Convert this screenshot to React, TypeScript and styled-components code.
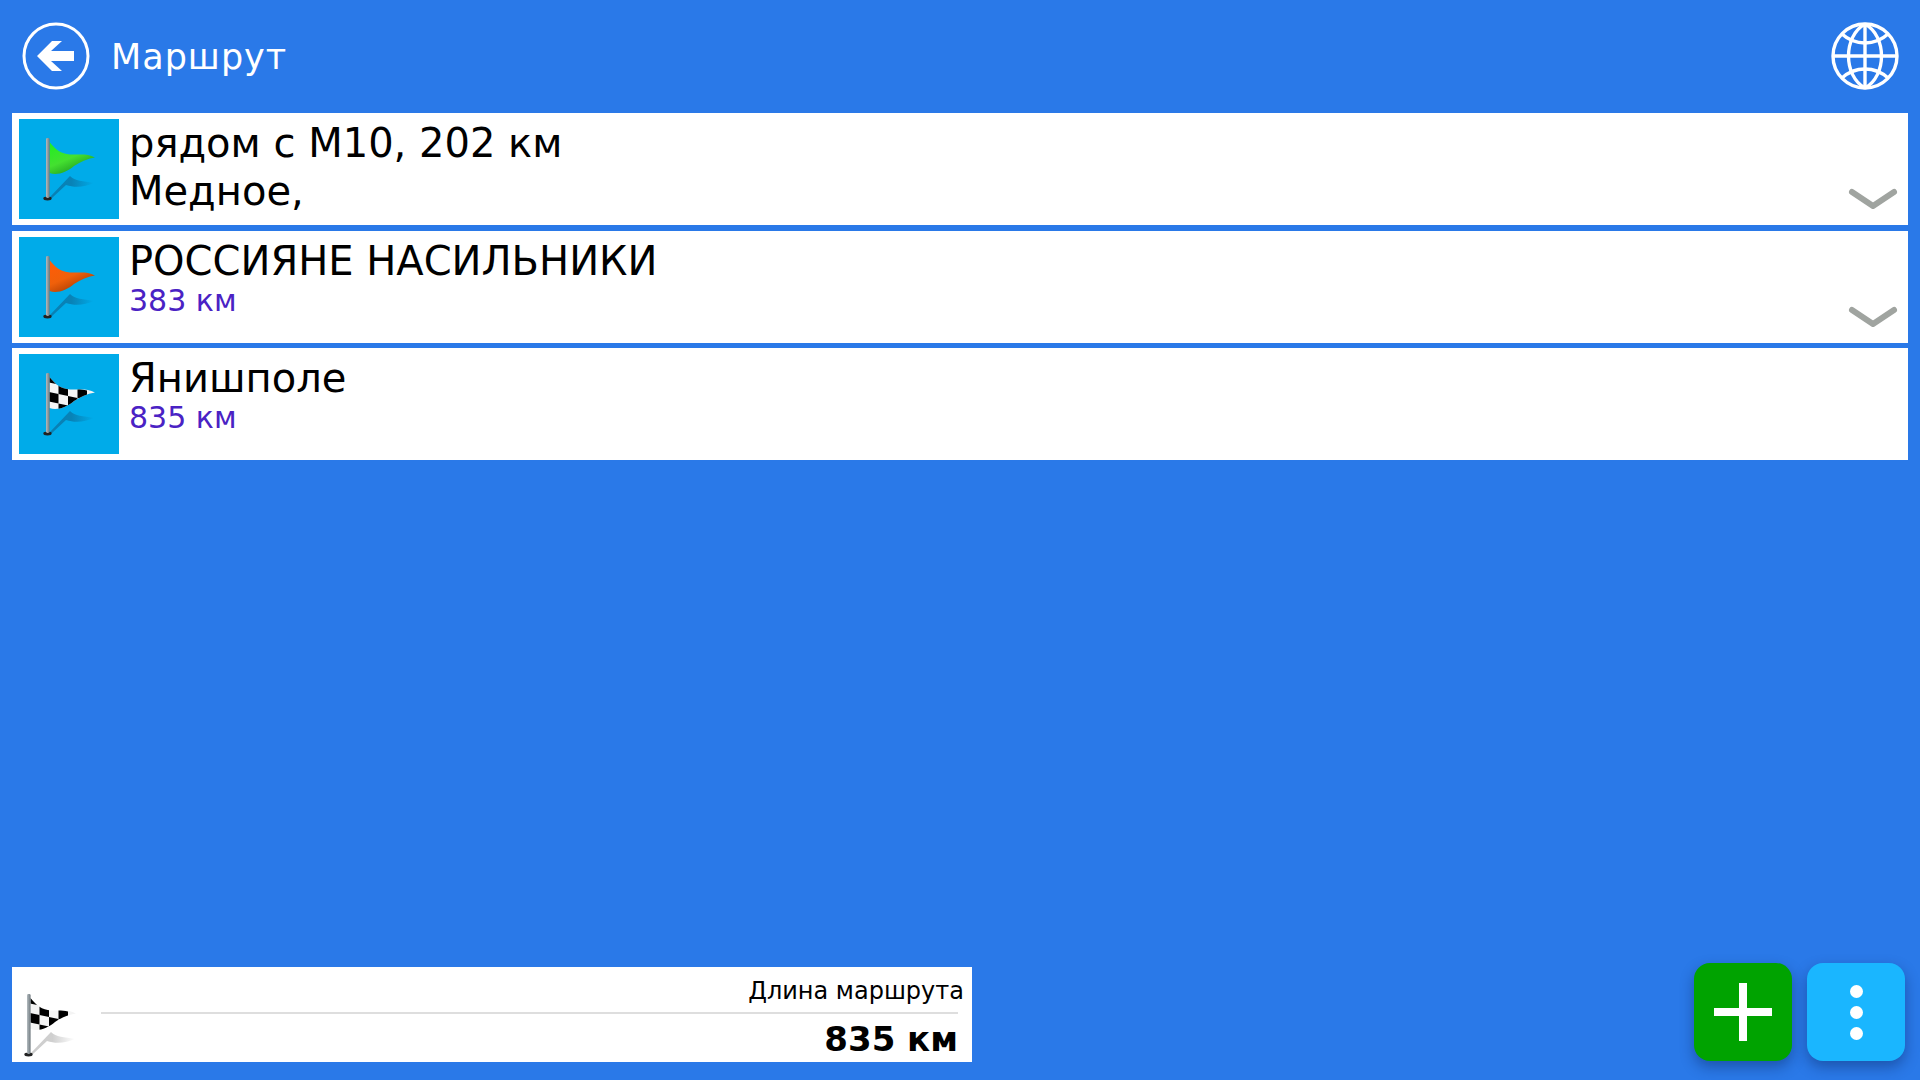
import React from 'react';
import styled, { createGlobalStyle } from 'styled-components';

type FlagKind = 'green' | 'orange' | 'checker';

interface Waypoint {
    id: number;
    flag: FlagKind;
    title: string;
    place?: string;
    distance?: string;
    expandable?: boolean;
}

const waypoints: Waypoint[] = [
    { id: 1, flag: 'green', title: 'рядом с М10, 202 км', place: 'Медное,', expandable: true },
    { id: 2, flag: 'orange', title: 'РОССИЯНЕ НАСИЛЬНИКИ', distance: '383 км', expandable: true },
    { id: 3, flag: 'checker', title: 'Янишполе', distance: '835 км' },
];

const GlobalStyle = createGlobalStyle`
    html, body {
        margin: 0;
        padding: 0;
        background: #2a79e8;
    }
    * {
        box-sizing: border-box;
    }
`;

const Page = styled.div`
    width: 1920px;
    height: 1080px;
    display: flex;
    flex-direction: column;
    overflow: hidden;
    background: #2a79e8;
    font-family: 'DejaVu Sans', sans-serif;
`;

const Header = styled.header`
    height: 113px;
    flex: none;
    display: flex;
    align-items: center;
    padding: 0 21px 2px 22px;
    color: #fff;
`;

const HeaderTitle = styled.h1`
    flex: 1;
    margin: 2px 0 0 21px;
    font-size: 35px;
    font-weight: 400;
    letter-spacing: 1px;
`;

const List = styled.main`
    flex: 1;
    display: flex;
    flex-direction: column;
    gap: 5.5px;
    padding: 0 12px;
`;

const Row = styled.article`
    position: relative;
    height: 112px;
    display: flex;
    padding: 6px 6px 6px 7px;
    background: #fff;
`;

const Tile = styled.div`
    width: 100px;
    height: 100px;
    flex: none;
    background: #00abe9;
`;

const RowText = styled.div`
    margin-left: 10px;
    display: flex;
    flex-direction: column;
`;

const RowTitle = styled.div`
    font-size: 40px;
    line-height: 48px;
    color: #000;
`;

const RowDistance = styled.div`
    font-size: 30px;
    line-height: 36px;
    margin-top: -2px;
    color: #4a22c4;
`;

const Chevron = styled.svg`
    position: absolute;
    right: 10px;
    bottom: 13px;
`;

const Footer = styled.footer`
    flex: none;
    height: 117px;
    display: flex;
    align-items: flex-start;
    justify-content: space-between;
    padding: 0 15px 0 12px;
`;

const Summary = styled.section`
    width: 960px;
    height: 95px;
    margin-top: 4px;
    display: flex;
    background: #fff;
`;

const SummaryFlag = styled.div`
    flex: none;
    width: 101px;
    margin-left: -12px;
    padding-top: 8px;
`;

const SummaryBody = styled.div`
    flex: 1;
    margin-right: 14px;
    display: flex;
    flex-direction: column;
`;

const SummaryLabel = styled.div`
    margin-right: -6px;
    height: 45px;
    padding-top: 10px;
    font-size: 24px;
    line-height: 28px;
    text-align: right;
    color: #000;
`;

const SummaryRule = styled.div`
    height: 2px;
    background: #dedede;
`;

const SummaryValue = styled.div`
    margin-top: 5px;
    font-size: 34px;
    line-height: 40px;
    font-weight: 700;
    text-align: right;
    color: #000;
`;

const Actions = styled.div`
    display: flex;
    gap: 15px;
`;

const ActionButton = styled.button<{ $color: string }>`
    width: 98px;
    height: 98px;
    padding: 0;
    border: 0;
    border-radius: 16px;
    display: flex;
    flex-direction: column;
    align-items: center;
    justify-content: center;
    gap: 8px;
    background: ${({ $color }) => $color};
    box-shadow: 0 6px 14px rgba(10, 40, 100, 0.45);
`;

const PlusIcon = styled.svg`
    display: block;
`;

const Dot = styled.span`
    width: 13px;
    height: 13px;
    border-radius: 50%;
    background: #fff;
`;

const FlagSvg = styled.svg`
    display: block;
`;

const BackIcon = () => (
    <svg width="68" height="68" viewBox="0 0 68 68" fill="none">
        <circle cx="34" cy="34" r="32" stroke="#fff" strokeWidth="3" />
        <path d="M15 34 L30 19 H40 L29 29 H52 V39 H29 L40 49 H30 Z" fill="#fff" />
    </svg>
);

const GlobeIcon = () => (
    <svg width="68" height="68" viewBox="0 0 68 68" fill="none" stroke="#fff" strokeWidth="3.4">
        <circle cx="34" cy="34" r="32" />
        <path d="M34 2 V66" />
        <path d="M2 34 H66" />
        <path d="M34 2 C12 14 12 54 34 66" />
        <path d="M34 2 C56 14 56 54 34 66" />
        <path d="M11 12 C24 24 44 24 57 12" />
        <path d="M11 56 C24 44 44 44 57 56" />
    </svg>
);

const ChevronIcon = () => (
    <Chevron width="50" height="24" viewBox="0 0 50 24" fill="none">
        <path d="M4 4 L25 18 L46 4" stroke="#a0a4a0" strokeWidth="6" strokeLinecap="round" strokeLinejoin="round" />
    </Chevron>
);

const FLAG_SHAPE = 'M30.5 23 C36 30 42 35 51 35.5 C60 36 68 34 76 38.5 C68 39.5 61 43 55 47 C48 53 38 57 30.5 54 Z';

const flagStops: Record<'green' | 'orange', [string, string, string]> = {
    green: ['#22ee22', '#44e030', '#1f9c20'],
    orange: ['#ff5c08', '#f0600a', '#a83c04'],
};

// the cells run down a little towards the tip, as the cloth hangs
const checkerCells = () => {
    const cells: React.ReactElement[] = [];
    for (let col = 0; col < 4; col += 1) {
        for (let row = 0; row < 4; row += 1) {
            if ((col + row) % 2 === 0) {
                const x = 30 + col * 9.5;
                const y = 19 + row * 9.5 + col * 2;
                cells.push(<path key={`${col}-${row}`} d={`M${x} ${y} L${x + 9.5} ${y + 2} V${y + 11.5} L${x} ${y + 9.5} Z`} fill="#000" />);
            }
        }
    }
    return cells;
};

// flag on its pole with the shadow on the ground, on a 100x100 grid
const Flag: React.FC<{ kind: FlagKind; shadow: string; id: string }> = ({ kind, shadow, id }) => (
    <FlagSvg width="100" height="100" viewBox="0 0 100 100">
        <defs>
            {kind !== 'checker' && (
                <linearGradient id={`${id}-fill`} x1="0" y1="0.1" x2="0.55" y2="1">
                    <stop offset="0" stopColor={flagStops[kind][0]} />
                    <stop offset="0.55" stopColor={flagStops[kind][1]} />
                    <stop offset="1" stopColor={flagStops[kind][2]} />
                </linearGradient>
            )}
            <linearGradient id={`${id}-shadow`} x1="0" y1="0" x2="1" y2="0">
                <stop offset="0" stopColor={shadow} stopOpacity="0.85" />
                <stop offset="0.5" stopColor={shadow} stopOpacity="0.8" />
                <stop offset="1" stopColor={shadow} stopOpacity="0" />
            </linearGradient>
            <linearGradient id={`${id}-pole`} x1="0" y1="0" x2="1" y2="0">
                <stop offset="0" stopColor="#b4bcc0" />
                <stop offset="1" stopColor="#6e787e" />
            </linearGradient>
            <clipPath id={`${id}-clip`}>
                <path d={FLAG_SHAPE} />
            </clipPath>
        </defs>
        <path d="M30 79 L51 57 C56 62 64 62 75 64 C66 68 56 69 47 66 L33 79 Z" fill={`url(#${id}-shadow)`} />
        <ellipse cx="28.5" cy="79.5" rx="4.2" ry="1.9" fill="#222" />
        {kind === 'checker' ? (
            <g clipPath={`url(#${id}-clip)`}>
                <rect x="30" y="20" width="48" height="40" fill="#f4f4f4" />
                {checkerCells()}
            </g>
        ) : (
            <path d={FLAG_SHAPE} fill={`url(#${id}-fill)`} />
        )}
        <rect x="27" y="19" width="3.6" height="60" rx="1.4" fill={`url(#${id}-pole)`} />
    </FlagSvg>
);

const App: React.FC = () => {
    return (
        <Page>
            <GlobalStyle />
            <Header>
                <BackIcon />
                <HeaderTitle>Маршрут</HeaderTitle>
                <GlobeIcon />
            </Header>
            <List>
                {waypoints.map((point) => (
                    <Row key={point.id}>
                        <Tile>
                            <Flag kind={point.flag} shadow="#0a78aa" id={`flag-${point.id}`} />
                        </Tile>
                        <RowText>
                            <RowTitle>{point.title}</RowTitle>
                            {point.place && <RowTitle>{point.place}</RowTitle>}
                            {point.distance && <RowDistance>{point.distance}</RowDistance>}
                        </RowText>
                        {point.expandable && <ChevronIcon />}
                    </Row>
                ))}
            </List>
            <Footer>
                <Summary>
                    <SummaryFlag>
                        <Flag kind="checker" shadow="#c4c4c4" id="flag-total" />
                    </SummaryFlag>
                    <SummaryBody>
                        <SummaryLabel>Длина маршрута</SummaryLabel>
                        <SummaryRule />
                        <SummaryValue>835 км</SummaryValue>
                    </SummaryBody>
                </Summary>
                <Actions>
                    <ActionButton $color="#00a300" aria-label="Добавить">
                        <PlusIcon width="58" height="58" viewBox="0 0 58 58">
                            <path d="M25 0 H33 V25 H58 V33 H33 V58 H25 V33 H0 V25 H25 Z" fill="#fff" />
                        </PlusIcon>
                    </ActionButton>
                    <ActionButton $color="#1ab6ff" aria-label="Меню">
                        <Dot />
                        <Dot />
                        <Dot />
                    </ActionButton>
                </Actions>
            </Footer>
        </Page>
    );
};

export default App;
